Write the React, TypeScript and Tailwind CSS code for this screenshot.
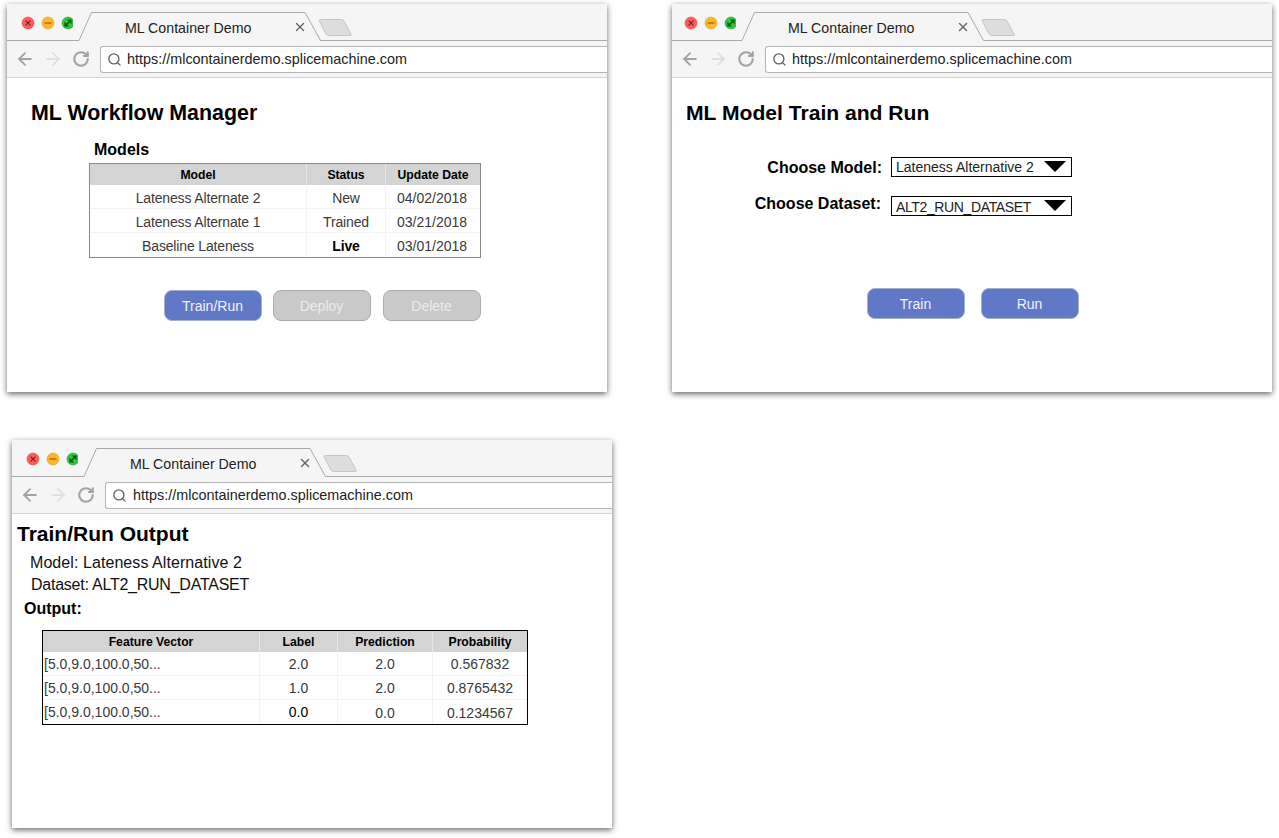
import React from "react";
import { ArrowLeft, ArrowRight, RotateCw, Search, X } from "lucide-react";

function Lights({ left }: { left: number }) {
  return (
    <svg className="absolute top-[12px]" style={{ left }} width="52" height="14" viewBox="0 0 52 14">
      <circle cx="7" cy="7" r="6" fill="#fc5b57" stroke="#e5453f" strokeWidth="0.6" />
      <path d="M4.6 4.6l4.8 4.8M9.4 4.6l-4.8 4.8" stroke="#7d1a16" strokeWidth="1.1" />
      <circle cx="27" cy="7" r="6" fill="#fdb52c" stroke="#e49d1e" strokeWidth="0.6" />
      <path d="M23.5 7h7" stroke="#a66a0a" strokeWidth="1.3" />
      <circle cx="47" cy="7" r="6" fill="#2fc53f" stroke="#21a52f" strokeWidth="0.6" />
      <path d="M43.4 10.6V5.8L48.2 10.6ZM50.6 3.4V8.2L45.8 3.4Z" fill="#0c5c16" />
      <path d="M44 10l6-6" stroke="#0c5c16" strokeWidth="1.6" />
    </svg>
  );
}

function Browser({
  x,
  y,
  w,
  lights = 14,
  titleLeft,
  urlPad,
  children,
}: {
  x: number;
  y: number;
  w: number;
  lights?: number;
  titleLeft: number;
  urlPad: number;
  children: React.ReactNode;
}) {
  const dx = titleLeft - 118;
  return (
    <div
      className="absolute h-[388px] bg-white shadow-[0_2px_6px_rgba(0,0,0,0.6)] flex flex-col"
      style={{ left: x, top: y, width: w }}
    >
      <div className="relative h-[37px] bg-[#f5f5f5] shrink-0">
        <svg className="absolute left-0 top-0" width={w} height="37" viewBox={`0 0 ${w} 37`}>
          <path
            d={`M0 36.5H${72 + dx}L${84.5 + dx} 8.5H${298 + dx}L${313.5 + dx} 36.5H${w}`}
            fill="none"
            stroke="#a9a9a9"
            strokeWidth="1"
          />
          <path
            d={`M${312 + dx} 16.5Q${312 + dx} 15.5 ${314 + dx} 15.5H${334 + dx}Q${336 + dx} 15.5 ${337 + dx} 17L${344 + dx} 30Q${345 + dx} 31.5 ${343 + dx} 31.5H${322 + dx}Q${320 + dx} 31.5 ${319 + dx} 30Z`}
            fill="#dddddd"
            stroke="#c6c6c6"
          />
        </svg>
        <Lights left={lights} />
        <span
          className="absolute top-[16px] text-[14.2px] leading-[16px] text-[#222] whitespace-nowrap"
          style={{ left: titleLeft }}
        >
          ML Container Demo
        </span>
        <X
          className="absolute top-[16px] text-[#666]"
          style={{ left: titleLeft + 168 }}
          size={14}
          strokeWidth={2.4}
        />
      </div>
      <div className="h-[36px] bg-[#f5f5f5] border-b border-[#d4d4d4] flex items-center shrink-0 box-content">
        <ArrowLeft className="ml-[8px] text-[#a3a3a3] shrink-0" size={20} strokeWidth={2.2} />
        <ArrowRight className="ml-[8px] text-[#e0e0e0] shrink-0" size={20} strokeWidth={2.2} />
        <RotateCw className="ml-[9px] text-[#a3a3a3] shrink-0" size={18} strokeWidth={2.8} />
        <div className="ml-[10px] flex-1 h-[27px] bg-white border border-r-0 border-[#b5b5b5] rounded-l-[3px] flex items-center">
          <Search className="ml-[6px] text-[#666] shrink-0" size={15} strokeWidth={2.2} />
          <span
            className="text-[14.4px] leading-[16px] text-[#222] whitespace-nowrap"
            style={{ marginLeft: urlPad }}
          >
            https://mlcontainerdemo.splicemachine.com
          </span>
        </div>
      </div>
      {children}
    </div>
  );
}

type Cell = { text: string; bold?: boolean; left?: boolean; dark?: boolean; extra?: string };

function DataTable({
  cols,
  head,
  rows,
  border,
}: {
  cols: number[];
  head: string[];
  rows: Cell[][];
  border: string;
}) {
  return (
    <table
      className={`table-fixed border-separate border-spacing-0 border ${border}`}
      style={{ width: cols.reduce((a, b) => a + b, 0) + 2 }}
    >
      <colgroup>
        {cols.map((c, i) => (
          <col key={i} style={{ width: c }} />
        ))}
      </colgroup>
      <thead>
        <tr className="h-[21px] bg-[#d4d4d4]">
          {head.map((h, i) => (
            <th
              key={h}
              className={`p-0 text-[12.2px] leading-[14px] font-bold text-black text-center ${i < head.length - 1 ? "border-r border-[#e8e8e8]" : ""}`}
            >
              {h}
            </th>
          ))}
        </tr>
      </thead>
      <tbody>
        {rows.map((r, ri) => (
          <tr key={ri} className="h-[24px]">
            {r.map((c, i) => (
              <td
                key={i}
                className={`p-0 leading-[16px] text-[14px] ${c.extra ?? ""} ${c.left ? "text-left pl-[1px]" : "text-center"} ${c.bold ? "font-bold text-black" : c.dark ? "text-black" : "text-[#3a3a3a]"} ${i < r.length - 1 ? "border-r border-[#f3f3f3]" : ""} ${ri < rows.length - 1 ? "border-b border-[#f3f3f3]" : ""}`}
              >
                {c.text}
              </td>
            ))}
          </tr>
        ))}
      </tbody>
    </table>
  );
}

function Btn({ label, active }: { label: string; active?: boolean }) {
  return (
    <div
      className={`w-[98px] h-[31px] rounded-[8px] border flex items-center justify-center pt-[1px] pr-[1px] text-[14px] ${
        active ? "bg-[#5f79c6] border-[#a5aec9] text-[#f0f3fb]" : "bg-[#c9c9c9] border-[#ababab] text-[#ececec]"
      }`}
    >
      {label}
    </div>
  );
}

function Select({ label, textClass }: { label: string; textClass: string }) {
  return (
    <div className="w-[181px] h-[20px] border border-black bg-white flex items-center pl-[4px] relative">
      <span className={`${textClass} text-[14px] leading-[16px] text-[#222] whitespace-nowrap`}>{label}</span>
      <svg className="absolute left-[152px] top-[3px]" width="22" height="11" viewBox="0 0 22 11">
        <path d="M0 0H22L11 11Z" fill="#000" />
      </svg>
    </div>
  );
}

const N = "pt-[2px] tracking-[-0.15px]";
const D = "pt-[2px] pr-[2px] text-[14.4px]";
const L = "pt-[1px]";

export default function App() {
  return (
    <div
      className="relative w-[1279px] h-[838px] bg-white overflow-hidden"
      style={{ fontFamily: '"Liberation Sans", Arial, sans-serif' }}
    >
      <Browser x={7} y={4} w={600} titleLeft={118} urlPad={5}>
        <div className="pl-[24px] pt-[22px]">
          <h1 className="text-[21.4px] leading-[26px] font-bold text-black">ML Workflow Manager</h1>
          <h2 className="ml-[63px] mt-[14px] text-[16px] leading-[20px] font-bold text-black">Models</h2>
          <div className="ml-[58px] mt-[3px] w-[392px]">
            <DataTable
              border="border-[#8a8a8a]"
              cols={[217, 79, 94]}
              head={["Model", "Status", "Update Date"]}
              rows={[
                [{ text: "Lateness Alternate 2", extra: N }, { text: "New", extra: N }, { text: "04/02/2018", extra: D }],
                [{ text: "Lateness Alternate 1", extra: N }, { text: "Trained", extra: N }, { text: "03/21/2018", extra: D }],
                [{ text: "Baseline Lateness", extra: N }, { text: "Live", bold: true, extra: N }, { text: "03/01/2018", extra: D }],
              ]}
            />
            <div className="mt-[32px] flex justify-end gap-[12px]">
              <div className="-mr-[1px]">
                <Btn label="Train/Run" active />
              </div>
              <Btn label="Deploy" />
              <Btn label="Delete" />
            </div>
          </div>
        </div>
      </Browser>

      <Browser x={672} y={4} w={600} lights={12} titleLeft={116} urlPad={5}>
        <div className="pl-[14px] pt-[22px]">
          <h1 className="text-[21.1px] leading-[26px] font-bold text-black">ML Model Train and Run</h1>
          <div className="mt-[31px] flex items-start">
            <div className="w-[196px] pt-[1px] text-right text-[16px] leading-[20px] font-bold text-black">Choose Model:</div>
            <div className="ml-[9px]">
              <Select label="Lateness Alternative 2" textClass="" />
            </div>
          </div>
          <div className="mt-[18px] flex items-start">
            <div className="w-[195px] -mt-[2px] text-right text-[16px] leading-[20px] font-bold text-black">Choose Dataset:</div>
            <div className="ml-[10px]">
              <Select label="ALT2_RUN_DATASET" textClass="pt-[1px] tracking-[-0.37px]" />
            </div>
          </div>
          <div className="ml-[181px] mt-[72px] flex gap-[16px]">
            <Btn label="Train" active />
            <Btn label="Run" active />
          </div>
        </div>
      </Browser>

      <Browser x={12} y={440} w={600} titleLeft={118} urlPad={6}>
        <div className="pl-[5px] pt-[7px]">
          <h1 className="text-[21px] leading-[26px] font-bold text-black">Train/Run Output</h1>
          <div className="ml-[13px] mt-[5px] text-[16px] tracking-[0.07px] leading-[22px] text-[#111]">Model: Lateness Alternative 2</div>
          <div className="ml-[14px] text-[16px] tracking-[-0.24px] leading-[22px] text-[#111]">Dataset: ALT2_RUN_DATASET</div>
          <div className="ml-[7px] mt-[2px] text-[16px] leading-[22px] font-bold text-black">Output:</div>
          <div className="ml-[25px] mt-[10px]">
            <DataTable
              border="border-black"
              cols={[217, 78, 95, 94]}
              head={["Feature Vector", "Label", "Prediction", "Probability"]}
              rows={[
                [{ text: "[5.0,9.0,100.0,50...", left: true }, { text: "2.0" }, { text: "2.0" }, { text: "0.567832" }],
                [{ text: "[5.0,9.0,100.0,50...", left: true }, { text: "1.0", extra: L }, { text: "2.0", extra: L }, { text: "0.8765432", extra: L }],
                [{ text: "[5.0,9.0,100.0,50...", left: true }, { text: "0.0", dark: true }, { text: "0.0", extra: L }, { text: "0.1234567", extra: L }],
              ]}
            />
          </div>
        </div>
      </Browser>
    </div>
  );
}
